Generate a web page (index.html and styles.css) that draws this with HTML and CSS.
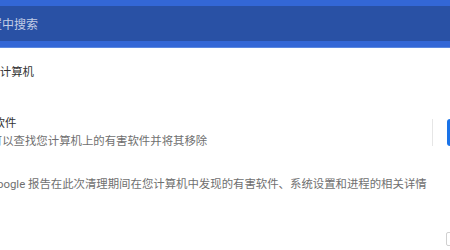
FILE: index.html
```html
<!DOCTYPE html>
<html lang="zh-CN">
<head>
  <meta charset="UTF-8" />
  <title>设置 - 清理计算机</title>
  <link rel="stylesheet" href="styles.css">
</head>
<body>
  <header class="toolbar">
    <div class="search-box">
      <span class="search-placeholder">在设置中搜索</span>
    </div>
  </header>

  <main class="subpage">
    <h2 class="subpage-title">清理计算机</h2>

    <div class="setting-row">
      <div class="setting-text">
        <div class="setting-label">查找有害软件</div>
        <div class="setting-sub">Chrome 可以查找您计算机上的有害软件并将其移除</div>
      </div>
      <div class="separator"></div>
      <button class="action-button" type="button">查找</button>
    </div>

    <div class="report-row">
      <p class="report-text">向 Google 报告在此次清理期间在您计算机中发现的有害软件、系统设置和进程的相关详情</p>
    </div>

    <div class="checkbox-row">
      <span class="checkbox"></span>
    </div>
  </main>
</body>
</html>
```

FILE: styles.css
```css
body {
  margin: 0;
  font-family: Roboto, "Noto Sans CJK SC", sans-serif;
  background: #fff;
  color: #333;
  overflow: hidden;
}

/* Blue settings toolbar */
.toolbar {
  background-color: #3367d6;
  padding: 6px 0 6px;
  border-bottom: 1px solid #5b88e0;
}

.search-box {
  height: 35px;
  background-color: #2951a5;
  display: flex;
  align-items: center;
  margin-left: -40px;
  padding-left: 6px;
}

.search-placeholder {
  color: #c3cde6;
  font-size: 12px;
}

/* Subpage content */
.subpage {
  margin-left: -58px;
  font-size: 11.4px;
  width: 565px;
}

.subpage-title {
  margin: 0;
  padding: 16px 0 16px 35px;
  font-size: 11.4px;
  font-weight: normal;
  line-height: 17px;
  color: #333;
}

.setting-row {
  display: flex;
  align-items: center;
  padding-top: 17px;
}

.setting-text {
  flex: 1;
  padding-left: 6px;
}

.setting-label {
  color: #333;
  line-height: 18px;
}

.setting-sub {
  color: #6f6f6f;
  line-height: 18px;
}

.separator {
  width: 1px;
  height: 27px;
  background-color: #e6e6e6;
  margin-right: 14px;
}

.action-button {
  width: 60px;
  height: 27px;
  border: none;
  border-radius: 3px;
  background-color: #1a73e8;
  color: #fff;
  font: inherit;
}

.report-row {
  padding: 25px 0 0 33px;
}

.report-text {
  margin: 0;
  line-height: 18px;
  color: #6f6f6f;
}

.checkbox-row {
  padding: 39px 0 0 504px;
}

.checkbox {
  display: block;
  width: 12px;
  height: 12px;
  border: 1px solid #d0d0d0;
  border-radius: 2px;
}
```
